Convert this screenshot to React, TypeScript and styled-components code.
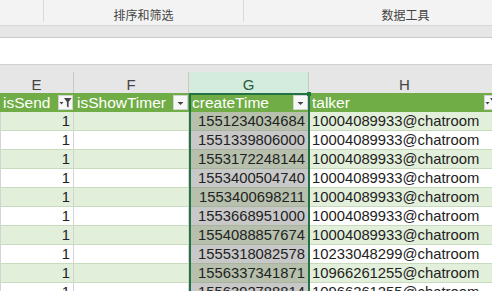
import React from "react";
import styled, { createGlobalStyle } from "styled-components";

const Global = createGlobalStyle`
  html, body { margin: 0; padding: 0; background: #e6e6e6; overflow: hidden; }
  body { font-family: "Liberation Sans", Arial, sans-serif; }
`;

const Page = styled.div`
  width: 492px;
  height: 291px;
  overflow: hidden;
  display: flex;
  flex-direction: column;
  background: #e6e6e6;
`;

const Ribbon = styled.div`
  height: 25px;
  flex-shrink: 0;
  display: flex;
  align-items: flex-start;
  background: #f3f3f3;
  border-bottom: 1px solid #d8d8d8;
`;

const Group = styled.div<{ $w: number }>`
  width: ${(p) => p.$w}px;
  height: 22px;
  flex-shrink: 0;
  box-sizing: border-box;
  border-right: 1px solid #d9d9d9;
  display: flex;
  align-items: center;
  justify-content: center;
  padding-top: 7px;
  font-family: "Noto Sans CJK SC", sans-serif;
  font-size: 12px;
  color: #444;
`;

const Band = styled.div`
  height: 11px;
  flex-shrink: 0;
  background: #e6e6e6;
  border-bottom: 1px solid #c9c9c9;
`;

const FormulaBar = styled.div`
  height: 26px;
  flex-shrink: 0;
  background: #ffffff;
  border-bottom: 1px solid #d0d0d0;
`;

const Gap = styled.div`
  height: 7px;
  flex-shrink: 0;
  background: #e6e6e6;
`;

const Sheet = styled.div`
  position: relative;
  flex: 1;
  overflow: hidden;
`;

const Row = styled.div`
  display: grid;
  grid-template-columns: 74px 115px 120px 192px;
  width: 501px;
`;

const Letter = styled.div<{ $sel?: boolean }>`
  height: 21px;
  box-sizing: border-box;
  border-right: 1px solid #c8c8c8;
  background: ${(p) => (p.$sel ? "#d3ecdd" : "#e6e6e6")};
  color: ${(p) => (p.$sel ? "#2b5a40" : "#444")};
  font-size: 15px;
  display: flex;
  align-items: center;
  justify-content: center;
  padding-top: 4px;
`;

const HeadCell = styled.div<{ $padRight?: number }>`
  height: 19px;
  box-sizing: border-box;
  background: #70ad47;
  color: #ffffff;
  font-size: 15.5px;
  display: flex;
  align-items: center;
  justify-content: space-between;
  padding: 0 ${(p) => p.$padRight ?? 1}px 0 3px;
  white-space: nowrap;
  overflow: hidden;
`;

const FilterBtn = styled.div`
  width: 15px;
  height: 15px;
  flex-shrink: 0;
  box-sizing: border-box;
  background: #f7f7f7;
  border: 1px solid #d2d2d2;
  display: flex;
  align-items: center;
  justify-content: center;
`;

const Cell = styled.div<{ $band: boolean; $sel?: boolean; $align: "left" | "right"; $first?: boolean }>`
  height: 19px;
  box-sizing: border-box;
  background: ${(p) =>
    p.$sel ? (p.$band ? "#b6c0ac" : "#c8c8c8") : p.$band ? "#e2efda" : "#ffffff"};
  border-bottom: 1px solid ${(p) => (p.$sel ? "#aab5a0" : "#c9dbbd")};
  border-right: 1px solid #d4d4d4;
  border-left: ${(p) => (p.$first ? "1px solid #d4d4d4" : "none")};
  color: #222;
  font-size: 14.8px;
  line-height: 18px;
  text-align: ${(p) => p.$align};
  padding: 0 3px;
  white-space: nowrap;
  overflow: hidden;
`;

const Selection = styled.div`
  position: absolute;
  left: 189px;
  top: 21px;
  width: 121px;
  height: 400px;
  box-sizing: border-box;
  border: 2px solid #217346;
  pointer-events: none;
`;

const Handle = styled.div`
  position: absolute;
  left: 307px;
  top: 20px;
  width: 4px;
  height: 4px;
  background: #217346;
`;

const Arrow = () => (
  <svg width="13" height="13" viewBox="0 0 13 13">
    <polygon points="3.5,6 9.5,6 6.5,9" fill="#444" />
  </svg>
);

const FilterIcon = () => (
  <svg width="13" height="13" viewBox="0 0 13 13">
    <polygon points="0.5,6 4.5,6 2.5,8.5" fill="#444" />
    <polygon points="5,2 12.5,2 9.6,6 9.6,11.5 7.9,10.5 7.9,6" fill="#444" />
  </svg>
);

const rows: [string, string][] = [
  ["1551234034684", "10004089933@chatroom"],
  ["1551339806000", "10004089933@chatroom"],
  ["1553172248144", "10004089933@chatroom"],
  ["1553400504740", "10004089933@chatroom"],
  ["1553400698211", "10004089933@chatroom"],
  ["1553668951000", "10004089933@chatroom"],
  ["1554088857674", "10004089933@chatroom"],
  ["1555318082578", "10233048299@chatroom"],
  ["1556337341871", "10966261255@chatroom"],
  ["1556392788814", "10966261255@chatroom"],
];

export default function App() {
  return (
    <Page>
      <Global />
      <Ribbon>
        <Group $w={44} />
        <Group $w={200}>排序和筛选</Group>
        <Group $w={324}>数据工具</Group>
      </Ribbon>
      <Band />
      <FormulaBar />
      <Gap />
      <Sheet>
        <Row>
          <Letter>E</Letter>
          <Letter>F</Letter>
          <Letter $sel>G</Letter>
          <Letter>H</Letter>
        </Row>
        <Row>
          <HeadCell>
            <span>isSend</span>
            <FilterBtn><FilterIcon /></FilterBtn>
          </HeadCell>
          <HeadCell>
            <span>isShowTimer</span>
            <FilterBtn><Arrow /></FilterBtn>
          </HeadCell>
          <HeadCell>
            <span>createTime</span>
            <FilterBtn><Arrow /></FilterBtn>
          </HeadCell>
          <HeadCell $padRight={2}>
            <span>talker</span>
            <FilterBtn><FilterIcon /></FilterBtn>
          </HeadCell>
        </Row>
        {rows.map(([time, talker], i) => {
          const band = i % 2 === 0;
          return (
            <Row key={time}>
              <Cell $band={band} $align="right" $first>1</Cell>
              <Cell $band={band} $align="left" />
              <Cell $band={band} $align="right" $sel>{time}</Cell>
              <Cell $band={band} $align="left">{talker}</Cell>
            </Row>
          );
        })}
        <Selection />
        <Handle />
      </Sheet>
    </Page>
  );
}
